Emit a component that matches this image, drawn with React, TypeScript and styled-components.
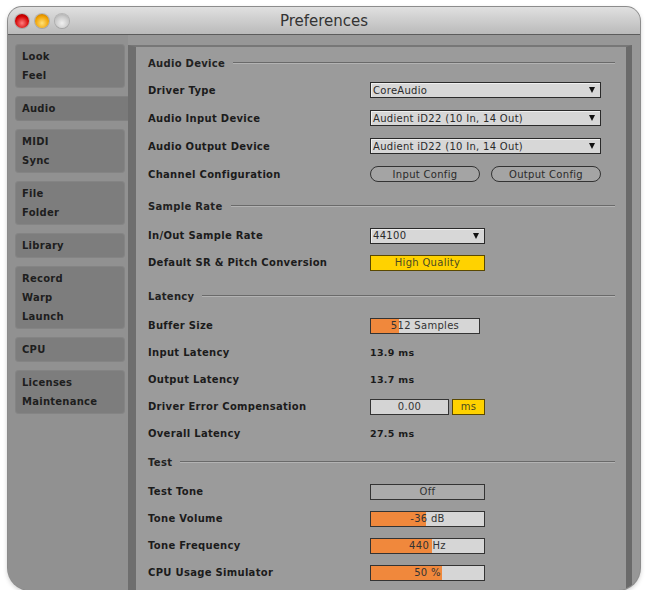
import styled, { createGlobalStyle } from "styled-components";

const GlobalStyle = createGlobalStyle`
  html, body {
    margin: 0;
    padding: 0;
    background: #ffffff;
  }

  body {
    font-family: "DejaVu Sans", "Liberation Sans", sans-serif;
  }
`;

const Window = styled.div`
  display: flex;
  flex-direction: column;
  width: 632px;
  height: 583px;
  margin: 7px 0 0 8px;
  border-radius: 14px 14px 22px 22px;
  overflow: hidden;
  background: #979797;
  box-shadow: 0 0 0 1px #8c8c8c, 0 2px 5px rgba(0, 0, 0, 0.25);
`;

const TitleBar = styled.div`
  display: grid;
  flex: none;
  height: 27px;
  grid-template-columns: 1fr auto 1fr;
  align-items: center;
  background: linear-gradient(#e0e0e0, #bababa);
  border-bottom: 1px solid #5c5c5c;
`;

const Lights = styled.div`
  display: flex;
  gap: 6px;
  padding-left: 7px;
`;

const Light = styled.span<{ $color: "red" | "yellow" | "gray" }>`
  width: 14px;
  height: 14px;
  border-radius: 50%;
  background: ${({ $color }) =>
    $color === "red"
      ? "radial-gradient(circle at 50% 65%, #ff8080, #d10000 60%, #8a0000)"
      : $color === "yellow"
      ? "radial-gradient(circle at 50% 65%, #ffe27a, #f0a000 60%, #a86400)"
      : "radial-gradient(circle at 50% 65%, #f0f0f0, #c8c8c8 60%, #9a9a9a)"};
  box-shadow: 0 0 0 1px rgba(0, 0, 0, 0.15);
`;

const Title = styled.div`
  color: #333333;
  font-family: "DejaVu Sans", sans-serif;
  font-size: 15px;
`;

const Body = styled.div`
  display: flex;
  flex: 1;
  min-height: 0;
`;

const Sidebar = styled.nav`
  display: flex;
  flex: none;
  flex-direction: column;
  width: 113px;
  gap: 8px;
  padding: 9px 0 0 7px;
  background: #919191;
`;

const Tab = styled.div<{ $selected?: boolean }>`
  width: ${({ $selected }) => ($selected ? "106px" : "96px")};
  padding: 3px 7px;
  border-radius: ${({ $selected }) => ($selected ? "4px 0 0 4px" : "4px")};
  background: ${({ $selected }) => ($selected ? "#7a7a7a" : "#7d7d7d")};
  box-shadow: inset 0 0 0 1px rgba(255, 255, 255, 0.06);
  color: #1e1e1e;
  font-size: 10px;
  font-weight: 700;
  letter-spacing: 0.25px;
  line-height: 19px;
  box-sizing: content-box;
`;

const Panel = styled.main`
  flex: 1;
  margin: 10px 8px 0 0;
  padding: 6px 11px 0 12px;
  border-top: 2px solid #777777;
  border-left: 8px solid #6e6e6e;
  border-right: 6px solid #6a6a6a;
  background: #9b9b9b;
`;

const Section = styled.section<{ $top: number }>`
  margin-top: ${({ $top }) => $top}px;
`;

const SectionHead = styled.div<{ $gap: number }>`
  display: flex;
  height: 20px;
  gap: 8px;
  align-items: center;
  margin-bottom: ${({ $gap }) => $gap}px;
  color: #222222;
  font-size: 10px;
  font-weight: 700;
  letter-spacing: 0.3px;

  &::after {
    content: "";
    flex: 1;
    border-top: 1px solid #6a6a6a;
    border-bottom: 1px solid #b3b3b3;
  }
`;

const Row = styled.div<{ $h?: number }>`
  display: grid;
  height: ${({ $h }) => $h ?? 27}px;
  grid-template-columns: 222px 1fr;
  align-items: center;
`;

const Label = styled.span`
  color: #1b1b1b;
  font-size: 10px;
  font-weight: 700;
  letter-spacing: 0.3px;
`;

const Controls = styled.div<{ $gap: number }>`
  display: flex;
  gap: ${({ $gap }) => $gap}px;
  align-items: center;
`;

const Select = styled.div<{ $w: number }>`
  display: flex;
  box-sizing: border-box;
  width: ${({ $w }) => $w}px;
  height: 16px;
  align-items: center;
  justify-content: space-between;
  padding: 0 5px 0 2px;
  border: 1px solid #2a2a2a;
  background: #d7d7d7;
  box-shadow: inset 1px 1px 0 #efefef;
  color: #2a2a2a;
  font-size: 10px;
  letter-spacing: 0.3px;

  &::after {
    content: "";
    border-top: 6px solid #111111;
    border-left: 3.5px solid transparent;
    border-right: 3.5px solid transparent;
  }
`;

const Pill = styled.div`
  display: flex;
  box-sizing: border-box;
  width: 110px;
  height: 16px;
  align-items: center;
  justify-content: center;
  border: 1px solid #333333;
  border-radius: 8px;
  background: #a4a4a4;
  color: #2a2a2a;
  font-size: 10px;
  letter-spacing: 0.3px;
`;

type Tone = "light" | "yellow" | "gray";

const Field = styled.div<{ $w: number; $tone?: Tone; $fill?: number }>`
  display: flex;
  box-sizing: border-box;
  width: ${({ $w }) => $w}px;
  height: 16px;
  align-items: center;
  justify-content: center;
  border: 1px solid ${({ $tone }) => ($tone === "yellow" ? "#5a4800" : "#333333")};
  background: ${({ $tone, $fill }) =>
    $tone === "yellow"
      ? "#ffd200"
      : $tone === "gray"
      ? "#ababab"
      : $fill !== undefined
      ? `linear-gradient(to right, #f0883c 0 ${$fill}%, #d6d6d6 ${$fill}%)`
      : "#d4d4d4"};
  color: ${({ $tone }) => ($tone === "yellow" ? "#4a4a20" : "#333333")};
  font-size: 10px;
  letter-spacing: 0.3px;
`;

const Value = styled.span`
  color: #1b1b1b;
  font-size: 9.5px;
  font-weight: 700;
  letter-spacing: 0.3px;
`;

const tabs = [
  ["Look", "Feel"],
  ["Audio"],
  ["MIDI", "Sync"],
  ["File", "Folder"],
  ["Library"],
  ["Record", "Warp", "Launch"],
  ["CPU"],
  ["Licenses", "Maintenance"],
];

export default function App() {
  return (
    <>
      <GlobalStyle />
      <Window>
        <TitleBar>
          <Lights>
            <Light $color="red" />
            <Light $color="yellow" />
            <Light $color="gray" />
          </Lights>
          <Title>Preferences</Title>
          <span />
        </TitleBar>
        <Body>
          <Sidebar>
            {tabs.map((lines) => (
              <Tab key={lines[0]} $selected={lines[0] === "Audio"}>
                {lines.map((line) => (
                  <div key={line}>{line}</div>
                ))}
              </Tab>
            ))}
          </Sidebar>
          <Panel>
            <Section $top={0}>
              <SectionHead $gap={3}>Audio Device</SectionHead>
              <Row $h={28}>
                <Label>Driver Type</Label>
                <Select $w={231}>CoreAudio</Select>
              </Row>
              <Row $h={28}>
                <Label>Audio Input Device</Label>
                <Select $w={231}>Audient iD22 (10 In, 14 Out)</Select>
              </Row>
              <Row $h={28}>
                <Label>Audio Output Device</Label>
                <Select $w={231}>Audient iD22 (10 In, 14 Out)</Select>
              </Row>
              <Row $h={28}>
                <Label>Channel Configuration</Label>
                <Controls $gap={11}>
                  <Pill>Input Config</Pill>
                  <Pill>Output Config</Pill>
                </Controls>
              </Row>
            </Section>

            <Section $top={8}>
              <SectionHead $gap={6}>Sample Rate</SectionHead>
              <Row>
                <Label>In/Out Sample Rate</Label>
                <Select $w={115}>44100</Select>
              </Row>
              <Row>
                <Label>Default SR &amp; Pitch Conversion</Label>
                <Field $w={115} $tone="yellow">High Quality</Field>
              </Row>
            </Section>

            <Section $top={10}>
              <SectionHead $gap={6}>Latency</SectionHead>
              <Row>
                <Label>Buffer Size</Label>
                <Field $w={110} $fill={26}>512 Samples</Field>
              </Row>
              <Row>
                <Label>Input Latency</Label>
                <Value>13.9 ms</Value>
              </Row>
              <Row>
                <Label>Output Latency</Label>
                <Value>13.7 ms</Value>
              </Row>
              <Row>
                <Label>Driver Error Compensation</Label>
                <Controls $gap={3}>
                  <Field $w={79}>0.00</Field>
                  <Field $w={33} $tone="yellow">ms</Field>
                </Controls>
              </Row>
              <Row>
                <Label>Overall Latency</Label>
                <Value>27.5 ms</Value>
              </Row>
            </Section>

            <Section $top={5}>
              <SectionHead $gap={6}>Test</SectionHead>
              <Row>
                <Label>Test Tone</Label>
                <Field $w={115} $tone="gray">Off</Field>
              </Row>
              <Row>
                <Label>Tone Volume</Label>
                <Field $w={115} $fill={49}>-36 dB</Field>
              </Row>
              <Row>
                <Label>Tone Frequency</Label>
                <Field $w={115} $fill={54}>440 Hz</Field>
              </Row>
              <Row>
                <Label>CPU Usage Simulator</Label>
                <Field $w={115} $fill={63}>50 %</Field>
              </Row>
            </Section>
          </Panel>
        </Body>
      </Window>
    </>
  );
}
